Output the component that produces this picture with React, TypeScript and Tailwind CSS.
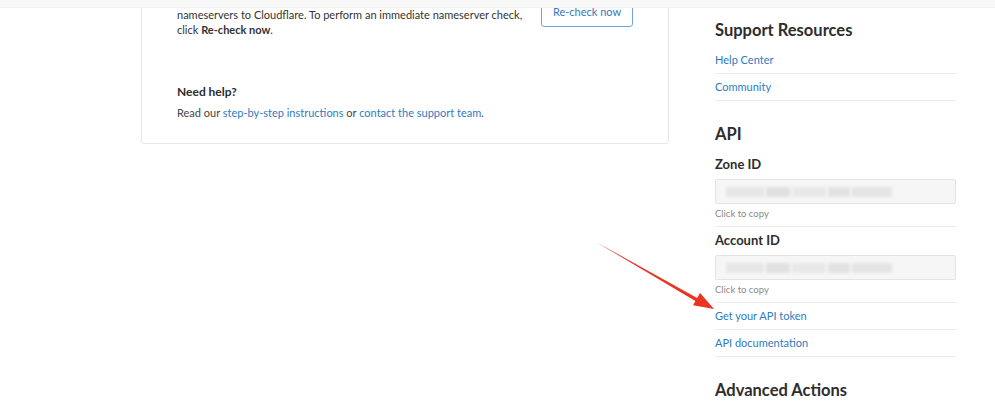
import React from 'react';

const FONT = { fontFamily: 'Lato, "Open Sans", Arial, sans-serif' };

function LinkRow({ label }: { label: string }) {
  return (
    <div className="border-b border-[#ececec]">
      <a className="block py-[6px] text-[11px] leading-[14px] text-[#2f7bbf]">{label}</a>
    </div>
  );
}

function CopyField({ label, first }: { label: string; first?: boolean }) {
  return (
    <div className={`border-b border-[#ececec] pb-[6px] ${first ? 'mt-[11px]' : 'mt-[5px]'}`}>
      <div className="text-[13px] leading-[17px] font-bold text-[#2d2d2d]">{label}</div>
      {/* blurred id value */}
      <div className="mt-[6px] h-[25px] rounded-[2px] border border-[#e3e3e3] bg-[#f6f6f6] flex items-center pl-[10px] overflow-hidden">
        <div className="flex gap-[2px] blur-[1.5px]">
          <div className="h-[10px] w-[38px] bg-[#e6e6e6]" />
          <div className="h-[10px] w-[24px] bg-[#e0e0e0]" />
          <div className="h-[10px] w-[34px] bg-[#e8e8e8]" />
          <div className="h-[10px] w-[22px] bg-[#e2e2e2]" />
          <div className="h-[10px] w-[40px] bg-[#e4e4e4]" />
        </div>
      </div>
      <div className="mt-[3px] text-[9.5px] leading-[13px] text-[#8a8a8a]">Click to copy</div>
    </div>
  );
}

export default function App() {
  return (
    <div className="relative w-full h-[414px] overflow-hidden bg-white text-[#333]" style={FONT}>
      {/* header edge */}
      <div className="absolute top-0 inset-x-0 h-[8px] bg-[#f8f8f8] border-b border-[#f1f1f1] z-10" />

      <div className="flex items-start pl-[141px]">
        {/* main card */}
        <div className="w-[528px] -mt-[12px] pt-[8px] pb-[23px] pl-[35px] pr-[35px] border border-[#e7e7e7] rounded-[3px] bg-white">
          <div className="flex items-start justify-between">
            <p className="mt-[10px] w-[352px] text-[11px] leading-[15px] text-[#333]">
              nameservers to Cloudflare. To perform an immediate nameserver check, click <b>Re-check now</b>.
            </p>
            <button className="h-[30px] w-[92px] rounded-[3px] border border-[#6fa8d6] text-[11px] text-[#2f7bbf] bg-white">
              Re-check now
            </button>
          </div>
          <div className="mt-[46px] text-[12px] leading-[17px] font-bold text-[#2d2d2d]">Need help?</div>
          <p className="mt-[5px] text-[11px] leading-[15px] text-[#444]">
            Read our <a className="text-[#2f7bbf]">step-by-step instructions</a> or{' '}
            <a className="text-[#2f7bbf]">contact the support team</a>.
          </p>
        </div>

        {/* sidebar */}
        <div className="ml-[46px] w-[241px] pt-[19px]">
          <h2 className="text-[16.5px] leading-[22px] font-bold text-[#2d2d2d]">Support Resources</h2>
          <div className="mt-[6px]">
            <LinkRow label="Help Center" />
            <LinkRow label="Community" />
          </div>

          <h2 className="mt-[22px] text-[16.5px] leading-[22px] font-bold text-[#2d2d2d]">API</h2>
          <CopyField label="Zone ID" first />
          <CopyField label="Account ID" />
          <LinkRow label="Get your API token" />
          <LinkRow label="API documentation" />

          <h2 className="mt-[22px] text-[16.5px] leading-[22px] font-bold text-[#2d2d2d]">Advanced Actions</h2>
        </div>
      </div>

      {/* red annotation arrow */}
      <svg className="absolute inset-0 pointer-events-none" width="995" height="414" viewBox="0 0 995 414">
        <polygon
          points="596,242 697.1,297.9 700.1,293 714,309 693.1,305.2 695.4,301"
          fill="#ea3323"
        />
      </svg>
    </div>
  );
}
